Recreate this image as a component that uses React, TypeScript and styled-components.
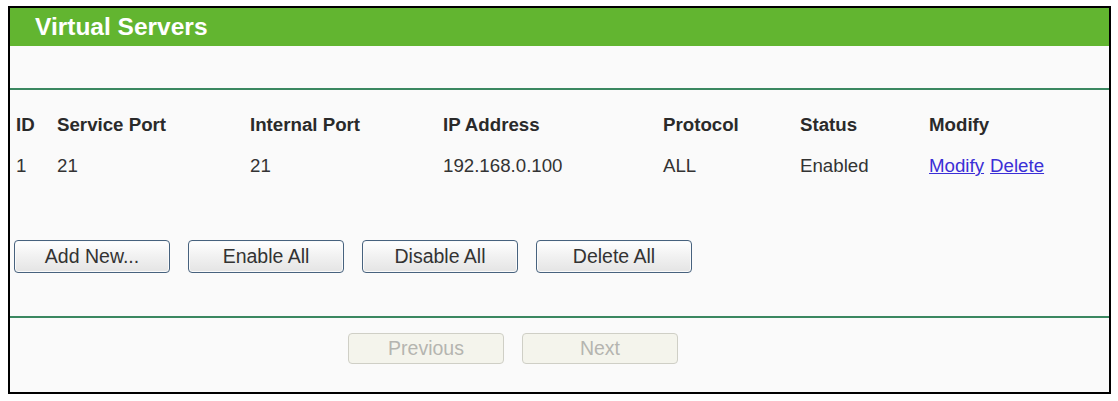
import React from 'react';
import styled, { createGlobalStyle } from 'styled-components';

const GlobalStyle = createGlobalStyle`
  body {
    margin: 0;
    background: #ffffff;
    font-family: 'Liberation Sans', Arial, sans-serif;
  }
`;

const Frame = styled.div`
  margin: 6px 0 0 8px;
  width: 1099px;
  border: 2px solid #000000;
  background: #fafafa;
  color: #333333;
`;

const TitleBar = styled.div`
  height: 38px;
  line-height: 38px;
  padding-left: 25px;
  background: #62b530;
  color: #ffffff;
  font-size: 24.5px;
  font-weight: bold;
`;

const Spacer = styled.div<{ $h: number }>`
  height: ${(p) => p.$h}px;
`;

const Divider = styled.div`
  height: 2px;
  background: #3a8760;
`;

const Table = styled.div`
  display: grid;
  grid-template-columns: 41px 193px 193px 220px 137px 129px 1fr;
  padding: 14px 0 0 6px;
  font-size: 18.7px;
  line-height: 41px;
`;

const HeadCell = styled.div`
  font-weight: bold;
  color: #2a2a2a;
`;

const Cell = styled.div`
  color: #333333;
`;

const Link = styled.a`
  color: #3b2fd6;
  text-decoration: underline;
  cursor: pointer;
  margin-right: 6px;
`;

const ButtonRow = styled.div<{ $left: number; $top: number; $bottom: number }>`
  display: flex;
  gap: 18px;
  padding: ${(p) => `${p.$top}px 0 ${p.$bottom}px ${p.$left}px`};
`;

const Button = styled.button<{ $h?: number }>`
  width: 156px;
  height: ${(p) => p.$h ?? 33}px;
  padding: 0;
  border: 1px solid #47627e;
  border-radius: 4px;
  background: linear-gradient(#ffffff, #f1f1f1 50%, #e4e4e4);
  box-shadow: inset 0 0 0 1px #fafafa;
  color: #333333;
  font-family: 'Liberation Sans', Arial, sans-serif;
  font-size: 19.5px;

  &:disabled {
    border-color: #cfcfc6;
    background: #f4f4ec;
    box-shadow: none;
    color: #b5b5b0;
  }
`;

const rows = [
  { id: '1', service: '21', internal: '21', ip: '192.168.0.100', protocol: 'ALL', status: 'Enabled' },
];

export default function App() {
  return (
    <>
      <GlobalStyle />
      <Frame>
        <TitleBar>Virtual Servers</TitleBar>
        <Spacer $h={42} />
        <Divider />
        <Table>
          <HeadCell>ID</HeadCell>
          <HeadCell>Service Port</HeadCell>
          <HeadCell>Internal Port</HeadCell>
          <HeadCell>IP Address</HeadCell>
          <HeadCell>Protocol</HeadCell>
          <HeadCell>Status</HeadCell>
          <HeadCell>Modify</HeadCell>
          {rows.map((r) => (
            <React.Fragment key={r.id}>
              <Cell>{r.id}</Cell>
              <Cell>{r.service}</Cell>
              <Cell>{r.internal}</Cell>
              <Cell>{r.ip}</Cell>
              <Cell>{r.protocol}</Cell>
              <Cell>{r.status}</Cell>
              <Cell>
                <Link>Modify</Link>
                <Link>Delete</Link>
              </Cell>
            </React.Fragment>
          ))}
        </Table>
        <ButtonRow $left={4} $top={54} $bottom={43}>
          <Button>Add New...</Button>
          <Button>Enable All</Button>
          <Button>Disable All</Button>
          <Button>Delete All</Button>
        </ButtonRow>
        <Divider />
        <ButtonRow $left={338} $top={15} $bottom={28}>
          <Button $h={31} disabled>
            Previous
          </Button>
          <Button $h={31} disabled>
            Next
          </Button>
        </ButtonRow>
      </Frame>
    </>
  );
}
